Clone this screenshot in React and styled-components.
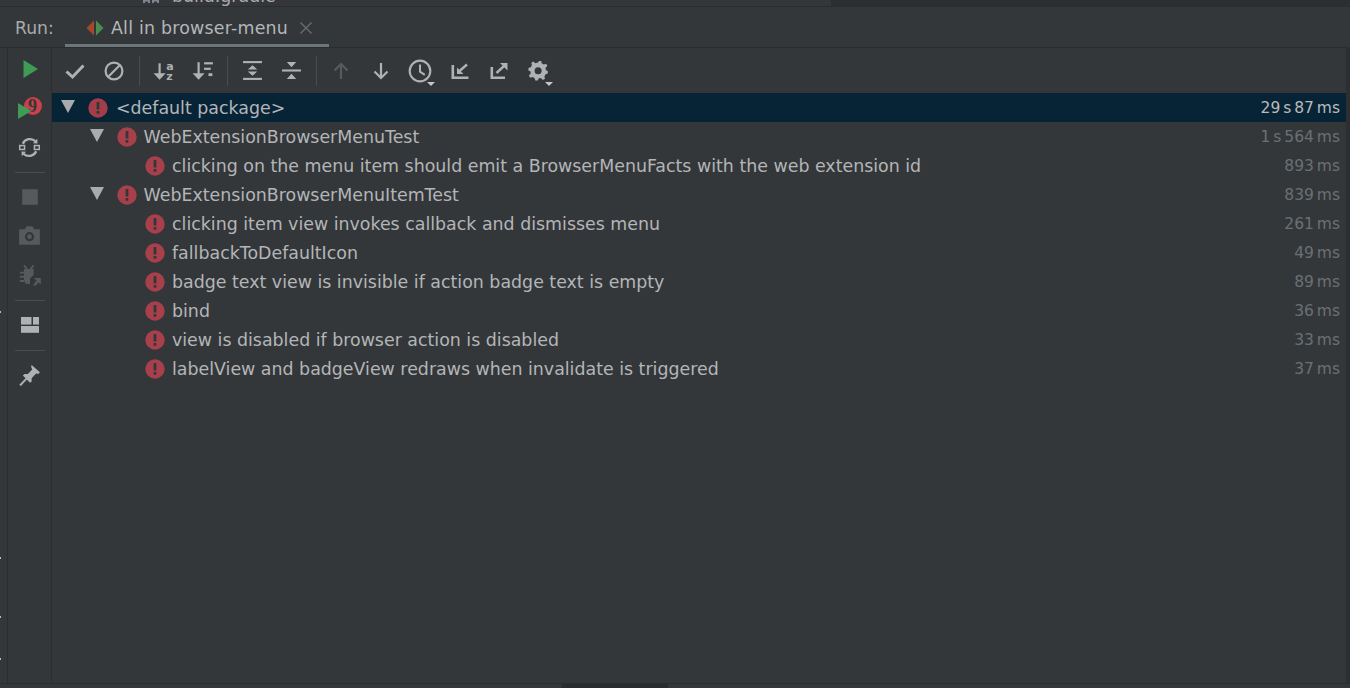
import React from 'react';
import styled, { createGlobalStyle } from 'styled-components';

const GlobalStyle = createGlobalStyle`
  html, body {
    margin: 0;
    padding: 0;
    height: 100%;
    overflow: hidden;
    background: #33373a;
  }
  #root {
    height: 100%;
  }
`;

const FONT = '"DejaVu Sans", "Noto Sans", sans-serif';
const ICON = '#afb1b3';
const MUTED = '#565a5c';

const Page = styled.div`
  position: relative;
  display: flex;
  flex-direction: column;
  height: 688px;
  background: #33373a;
  font-family: ${FONT};
  color: #bbbbbb;
  overflow: hidden;
`;

const TopStrip = styled.div`
  display: flex;
  flex: none;
  height: 6px;
  border-bottom: 1px solid #2b2d2e;
`;

const TreeFragment = styled.div`
  display: flex;
  align-items: flex-end;
  width: 831px;
  height: 6px;
  padding-left: 143px;
  box-sizing: border-box;
  overflow: hidden;
  background: #343639;
`;

const TreeIcon = styled.svg`
  flex: none;
  align-self: flex-start;
`;

const TreeLabel = styled.span`
  flex: none;
  margin: 0 0 1px 13px;
  font-size: 17.4px;
  line-height: 18px;
  color: #a9abad;
`;

const EditorFragment = styled.div`
  flex: 1;
  background: #2c2e2f;
`;

const TabBar = styled.div`
  display: flex;
  flex: none;
  height: 40px;
  border-bottom: 1px solid #2b2d2e;
  box-sizing: content-box;
`;

const RunLabel = styled.div`
  width: 65px;
  padding: 11px 0 0 15px;
  box-sizing: border-box;
  font-size: 17.2px;
  line-height: 20px;
  color: #a8aaac;
`;

const Tab = styled.div`
  display: flex;
  align-items: flex-start;
  width: 264px;
  height: 40px;
  padding: 11px 0 0 21px;
  box-sizing: border-box;
  border-bottom: 3px solid #6c757a;
`;

const TabTitle = styled.span`
  margin-left: 7px;
  font-size: 17.4px;
  line-height: 20px;
  letter-spacing: 0.22px;
  white-space: nowrap;
  color: #b4b6b8;
`;

const TabClose = styled.svg`
  margin: 4px 0 0 12px;
`;

const Body = styled.div`
  display: flex;
  flex: 1;
  min-height: 0;
`;

const Gutter = styled.div`
  flex: none;
  width: 7px;
  border-right: 1px solid #2b2d2e;
`;

const Rail = styled.div`
  display: flex;
  flex: none;
  flex-direction: column;
  align-items: center;
  width: 43px;
  padding-top: 1px;
  border-right: 1px solid #2b2d2e;
`;

const RailButton = styled.div`
  position: relative;
  display: flex;
  align-items: center;
  justify-content: center;
  flex: none;
  width: 30px;
  height: 39px;
  box-sizing: border-box;
  padding-top: ${(p) => p.$nudge || 0}px;
`;

const RailSeparator = styled.div`
  flex: none;
  width: 30px;
  height: 1px;
  margin: 6px 0 4px;
  background: #4a4d4f;
`;

const Badge = styled.span`
  position: absolute;
  top: 9px;
  left: 9px;
  width: 18px;
  height: 18px;
  border-radius: 50%;
  background: #c9414a;
  color: #33373a;
  font: bold 18px/18px "Liberation Serif", serif;
  text-align: center;
`;

const BadgeArrow = styled.svg`
  position: absolute;
  top: 14px;
  left: 2px;
`;

const Main = styled.div`
  display: flex;
  flex: 1;
  flex-direction: column;
  min-width: 0;
`;

const Toolbar = styled.div`
  display: flex;
  align-items: center;
  flex: none;
  height: 45px;
  padding-left: 3.3px;
`;

const ToolButton = styled.div`
  position: relative;
  display: flex;
  align-items: center;
  justify-content: center;
  flex: none;
  width: 39.4px;
  height: 39px;
`;

const ToolSeparator = styled.div`
  flex: none;
  width: 1px;
  height: 30px;
  margin: 0 4.5px;
  background: #4a4d4f;
`;

const Caret = styled.span`
  position: absolute;
  right: 5px;
  bottom: 4px;
  width: 0;
  height: 0;
  border-left: 4px solid transparent;
  border-right: 4px solid transparent;
  border-top: 4px solid #c4c6c8;
`;

const Tree = styled.div`
  flex: 1;
  min-height: 0;
`;

const Row = styled.div`
  display: flex;
  align-items: center;
  height: 29px;
  padding-left: ${(p) => 9 + p.$level * 28.5}px;
  padding-right: 6px;
  background: ${(p) => (p.$selected ? '#072437' : 'transparent')};
`;

const Toggle = styled.span`
  flex: none;
  width: 0;
  height: 0;
  margin: -3px 13px 0 0;
  border-left: 7px solid transparent;
  border-right: 7px solid transparent;
  border-top: 13px solid #a9abad;
`;

const ToggleSlot = styled.span`
  flex: none;
  width: 27px;
`;

const Label = styled.span`
  flex: 1;
  margin-left: ${(p) => p.$indent}px;
  font-size: 17.4px;
  line-height: 20px;
  white-space: nowrap;
  color: #b3b5b7;
`;

const Duration = styled.span`
  flex: none;
  font-size: 15.5px;
  line-height: 20px;
  white-space: nowrap;
  word-spacing: -2px;
  color: ${(p) => (p.$selected ? '#bbbbbb' : '#6c7073')};
`;

const BottomBar = styled.div`
  display: flex;
  flex: none;
  height: 4px;
  border-top: 1px solid #2b2d2e;
`;

const BottomThumb = styled.div`
  width: 106px;
  margin-left: 562px;
  background: #2a2c2d;
`;

const ScrollEdge = styled.div`
  flex: none;
  width: 4px;
  background: #2c2e2f;
`;

const EdgeTick = styled.span`
  position: absolute;
  left: 0;
  top: ${(p) => p.$y}px;
  width: 1px;
  height: 2px;
  background: #b9bbbd;
`;

const Svg = ({ size = 20, children }) => (
  <svg width={size} height={size} viewBox="0 0 20 20" fill="none">
    {children}
  </svg>
);

const ErrorIcon = ({ dim }) => (
  <svg width="20" height="20" viewBox="0 0 20 20" style={{ flex: 'none' }}>
    <circle cx="10" cy="10" r="9.7" fill={dim ? '#a33d49' : '#a8404b'} />
    <rect x="8.6" y="4" width="2.8" height="7.4" rx="0.5" fill="#33373a" />
    <rect x="8.6" y="12.9" width="2.8" height="2.9" rx="0.5" fill="#33373a" />
  </svg>
);

const PlayIcon = () => (
  <Svg>
    <path d="M3.5 1 L18 10 L3.5 19 Z" fill="#3f9b55" />
  </Svg>
);

const RerunIcon = ({ color = ICON }) => (
  <Svg size={23}>
    <path d="M4.2 6.8 A6.8 6.8 0 0 1 15.2 4.6" stroke={color} strokeWidth="2" />
    <path d="M13 6.2 L17 6.6 L16.7 2.4 Z" fill={color} />
    <path d="M15.8 13.2 A6.8 6.8 0 0 1 4.8 15.4" stroke={color} strokeWidth="2" />
    <path d="M7 13.8 L3 13.4 L3.3 17.6 Z" fill={color} />
    <rect x="1.5" y="8.3" width="4.2" height="3.4" stroke={color} strokeWidth="1.3" />
    <rect x="14.3" y="8.3" width="4.2" height="3.4" stroke={color} strokeWidth="1.3" />
  </Svg>
);

const StopIcon = () => (
  <Svg size={20}>
    <rect x="2.2" y="2.2" width="15.6" height="15.6" fill={MUTED} />
  </Svg>
);

const CameraIcon = () => (
  <Svg size={23}>
    <path
      fillRule="evenodd"
      d="M1 4.5 H6 L7.5 2 H12.5 L14 4.5 H19 V18 H1 Z M10 7 A4 4 0 1 0 10 15 A4 4 0 1 0 10 7 Z M10 9 A2 2 0 1 1 10 13 A2 2 0 1 1 10 9 Z"
      fill={MUTED}
    />
  </Svg>
);

const BugIcon = () => (
  <Svg size={24}>
    <g stroke={MUTED} strokeWidth="1.6">
      <path d="M5 2 L7.5 5 M13 2 L10.5 5" />
      <path d="M1.5 8 H5 M1.5 11.5 H5 M1.5 15 H5" />
    </g>
    <path d="M5 5 H13 V10 L10 13 V17.5 H7 Q5 16.5 5 14 Z" fill={MUTED} />
    <path d="M12.5 18.5 L15.5 14.5 L13.2 12.5 H19 V18 L17.2 16.3 L14.5 19 Z" fill={MUTED} />
  </Svg>
);

const LayoutIcon = () => (
  <Svg>
    <rect x="1" y="2" width="10.5" height="7.6" fill={ICON} />
    <rect x="13" y="2" width="6" height="7.6" fill={ICON} />
    <rect x="1" y="11" width="18" height="6.8" fill={ICON} />
  </Svg>
);

const PinIcon = () => (
  <Svg size={22}>
    <path d="M11.5 1 L19 7.5 L17.5 9 L15.5 8.6 L11.5 13 L11.5 16 L10 17 L3.5 10.5 L5 9 L8 9 L12 5 L11 2.5 Z" fill={ICON} />
    <path d="M7 13 L1 19.5" stroke={ICON} strokeWidth="1.8" />
  </Svg>
);

const CheckIcon = () => (
  <Svg>
    <path d="M1.5 10.5 L7.5 16 L18.5 4.5" stroke={ICON} strokeWidth="3" />
  </Svg>
);

const BlockedIcon = () => (
  <Svg>
    <circle cx="10" cy="10" r="8.4" stroke={ICON} strokeWidth="2.2" />
    <path d="M4.5 15.5 L15.5 4.5" stroke={ICON} strokeWidth="2.2" />
  </Svg>
);

const DownArrow = ({ x = 6, color = ICON, top = 2, bottom = 18 }) => (
  <g>
    <path d={`M${x} ${top} V${bottom - 2}`} stroke={color} strokeWidth="2" />
    <path d={`M${x - 5.5} ${bottom - 6} L${x} ${bottom} L${x + 5.5} ${bottom - 6}`} fill={color} />
  </g>
);

const SortAlphaIcon = () => (
  <Svg size={22}>
    <DownArrow x={6} top={3} bottom={18} />
    <text x="12" y="9" fontFamily={FONT} fontSize="10" fontWeight="700" fill={ICON}>a</text>
    <text x="12" y="18.5" fontFamily={FONT} fontSize="10" fontWeight="700" fill={ICON}>z</text>
  </Svg>
);

const SortDurationIcon = () => (
  <Svg size={22}>
    <DownArrow x={6} top={2} bottom={18} />
    <rect x="11" y="2" width="8" height="2" fill={ICON} />
    <rect x="11" y="7" width="6" height="2" fill={ICON} />
    <rect x="15" y="12" width="3.5" height="2.6" fill={ICON} />
  </Svg>
);

const ExpandIcon = () => (
  <Svg size={21}>
    <rect x="1" y="1" width="18" height="2" fill={ICON} />
    <rect x="1" y="17" width="18" height="2" fill={ICON} />
    <path d="M5.5 9 L10 5 L14.5 9 Z M5.5 11 L10 15 L14.5 11 Z" fill={ICON} />
  </Svg>
);

const CollapseIcon = () => (
  <Svg size={21}>
    <rect x="1" y="9" width="18" height="2" fill={ICON} />
    <path d="M5.5 2 H14.5 L10 6.8 Z M5.5 18 H14.5 L10 13.2 Z" fill={ICON} />
  </Svg>
);

const ArrowIcon = ({ up, color = ICON }) => (
  <Svg>
    <g transform={up ? 'rotate(180 10 10)' : undefined} stroke={color} strokeWidth="2.2">
      <path d="M10 2 V17" />
      <path d="M3.5 10.5 L10 17 L16.5 10.5" />
    </g>
  </Svg>
);

const ClockIcon = () => (
  <Svg size={24}>
    <circle cx="10" cy="10" r="8.6" stroke={ICON} strokeWidth="1.8" />
    <path d="M10 4.5 V10.5 L14 13.2" stroke={ICON} strokeWidth="1.7" />
  </Svg>
);

const ImportIcon = () => (
  <Svg>
    <path d="M2.8 4 V16.7 H18.5" stroke={ICON} strokeWidth="2.6" />
    <path d="M17 3.5 L9.5 10" stroke={ICON} strokeWidth="2.4" />
    <path d="M7 6.5 V13 H13.5 Z" fill={ICON} />
  </Svg>
);

const ExportIcon = () => (
  <Svg>
    <path d="M2.8 6 V16.7 H16" stroke={ICON} strokeWidth="2.6" />
    <path d="M7.5 12 L15 5" stroke={ICON} strokeWidth="2.4" />
    <path d="M11 2 H18.5 V9.5 Z" fill={ICON} />
  </Svg>
);

const GearIcon = () => (
  <Svg size={22}>
    <path
      d="M10 2.2 L11 0.8 H13 L13.3 3 L15.3 4.1 L17.4 3.4 L18.6 5.4 L17 6.9 V9.1 L18.9 10 V12.3 L16.9 12.9 L15.8 14.9 L16.4 17 L14.4 18.2 L12.9 16.6 H10.7 L9.8 18.6 H7.5 L7 16.6 L5 15.5 L2.9 16.1 L1.7 14.1 L3.3 12.6 V10.4 L1.3 9.5 V7.2 L3.4 6.6 L4.5 4.6 L3.9 2.5 L5.9 1.3 L7.4 2.9 Z"
      fill={ICON}
    />
    <circle cx="10.1" cy="9.75" r="3.2" fill="#33373a" />
  </Svg>
);

const TabIcon = () => (
  <svg width="18" height="16" viewBox="0 0 18 16" style={{ flex: 'none', marginTop: 2 }}>
    <path d="M8 0.5 V15.5 L0.5 8 Z" fill="#a3492b" />
    <path d="M10 0.5 V15.5 L17.5 8 Z" fill="#4b8b4d" />
  </svg>
);

const rows = [
  { level: 0, suite: true, selected: true, name: '<default package>', time: '29 s 87 ms', indent: 8 },
  { level: 1, suite: true, name: 'WebExtensionBrowserMenuTest', time: '1 s 564 ms', indent: 7 },
  { level: 2, name: 'clicking on the menu item should emit a BrowserMenuFacts with the web extension id', time: '893 ms', indent: 7 },
  { level: 1, suite: true, name: 'WebExtensionBrowserMenuItemTest', time: '839 ms', indent: 7 },
  { level: 2, name: 'clicking item view invokes callback and dismisses menu', time: '261 ms', indent: 7 },
  { level: 2, name: 'fallbackToDefaultIcon', time: '49 ms', indent: 7 },
  { level: 2, name: 'badge text view is invisible if action badge text is empty', time: '89 ms', indent: 7 },
  { level: 2, name: 'bind', time: '36 ms', indent: 7 },
  { level: 2, name: 'view is disabled if browser action is disabled', time: '33 ms', indent: 7 },
  { level: 2, name: 'labelView and badgeView redraws when invalidate is triggered', time: '37 ms', indent: 7 },
];

const App = () => {
  return (
    <Page>
      <GlobalStyle />
      <TopStrip>
        <TreeFragment>
          <TreeIcon width="16" height="4" viewBox="0 0 16 4">
            <path d="M0 0 H7 V3 H5 V1.5 H2 V3 H0 Z M9 0 H16 V3 H14 V1.5 H11 V3 H9 Z" fill="#7d8790" />
          </TreeIcon>
          <TreeLabel>build.gradle</TreeLabel>
        </TreeFragment>
        <EditorFragment />
      </TopStrip>
      <TabBar>
        <RunLabel>Run:</RunLabel>
        <Tab>
          <TabIcon />
          <TabTitle>All in browser-menu</TabTitle>
          <TabClose width="12" height="12" viewBox="0 0 12 12">
            <path d="M0.5 0.5 L11.5 11.5 M11.5 0.5 L0.5 11.5" stroke="#6c7073" strokeWidth="1.2" />
          </TabClose>
        </Tab>
      </TabBar>
      <Body>
        <Gutter />
        <Rail>
          <RailButton><PlayIcon /></RailButton>
          <RailButton>
            <Badge>9</Badge>
            <BadgeArrow width="15" height="18" viewBox="0 0 15 18">
              <path d="M1 1 L14.5 9 L1 17 Z" fill="#3f9b55" />
            </BadgeArrow>
          </RailButton>
          <RailButton $nudge={2}><RerunIcon /></RailButton>
          <RailSeparator />
          <RailButton><StopIcon /></RailButton>
          <RailButton><CameraIcon /></RailButton>
          <RailButton><BugIcon /></RailButton>
          <RailSeparator />
          <RailButton><LayoutIcon /></RailButton>
          <RailSeparator />
          <RailButton><PinIcon /></RailButton>
        </Rail>
        <Main>
          <Toolbar>
            <ToolButton><CheckIcon /></ToolButton>
            <ToolButton><BlockedIcon /></ToolButton>
            <ToolSeparator />
            <ToolButton><SortAlphaIcon /></ToolButton>
            <ToolButton><SortDurationIcon /></ToolButton>
            <ToolSeparator />
            <ToolButton><ExpandIcon /></ToolButton>
            <ToolButton><CollapseIcon /></ToolButton>
            <ToolSeparator />
            <ToolButton><ArrowIcon up color={MUTED} /></ToolButton>
            <ToolButton><ArrowIcon /></ToolButton>
            <ToolButton><ClockIcon /><Caret /></ToolButton>
            <ToolButton><ImportIcon /></ToolButton>
            <ToolButton><ExportIcon /></ToolButton>
            <ToolButton><GearIcon /><Caret /></ToolButton>
          </Toolbar>
          <Tree>
            {rows.map((row) => (
              <Row key={row.name} $level={row.level} $selected={row.selected}>
                {row.suite ? <Toggle /> : <ToggleSlot />}
                <ErrorIcon dim={row.selected} />
                <Label $indent={row.indent}>{row.name}</Label>
                <Duration $selected={row.selected}>{row.time}</Duration>
              </Row>
            ))}
          </Tree>
        </Main>
        <ScrollEdge />
      </Body>
      <BottomBar>
        <BottomThumb />
      </BottomBar>
      <EdgeTick $y={311} />
      <EdgeTick $y={557} />
      <EdgeTick $y={616} />
      <EdgeTick $y={658} />
    </Page>
  );
};

export default App;
